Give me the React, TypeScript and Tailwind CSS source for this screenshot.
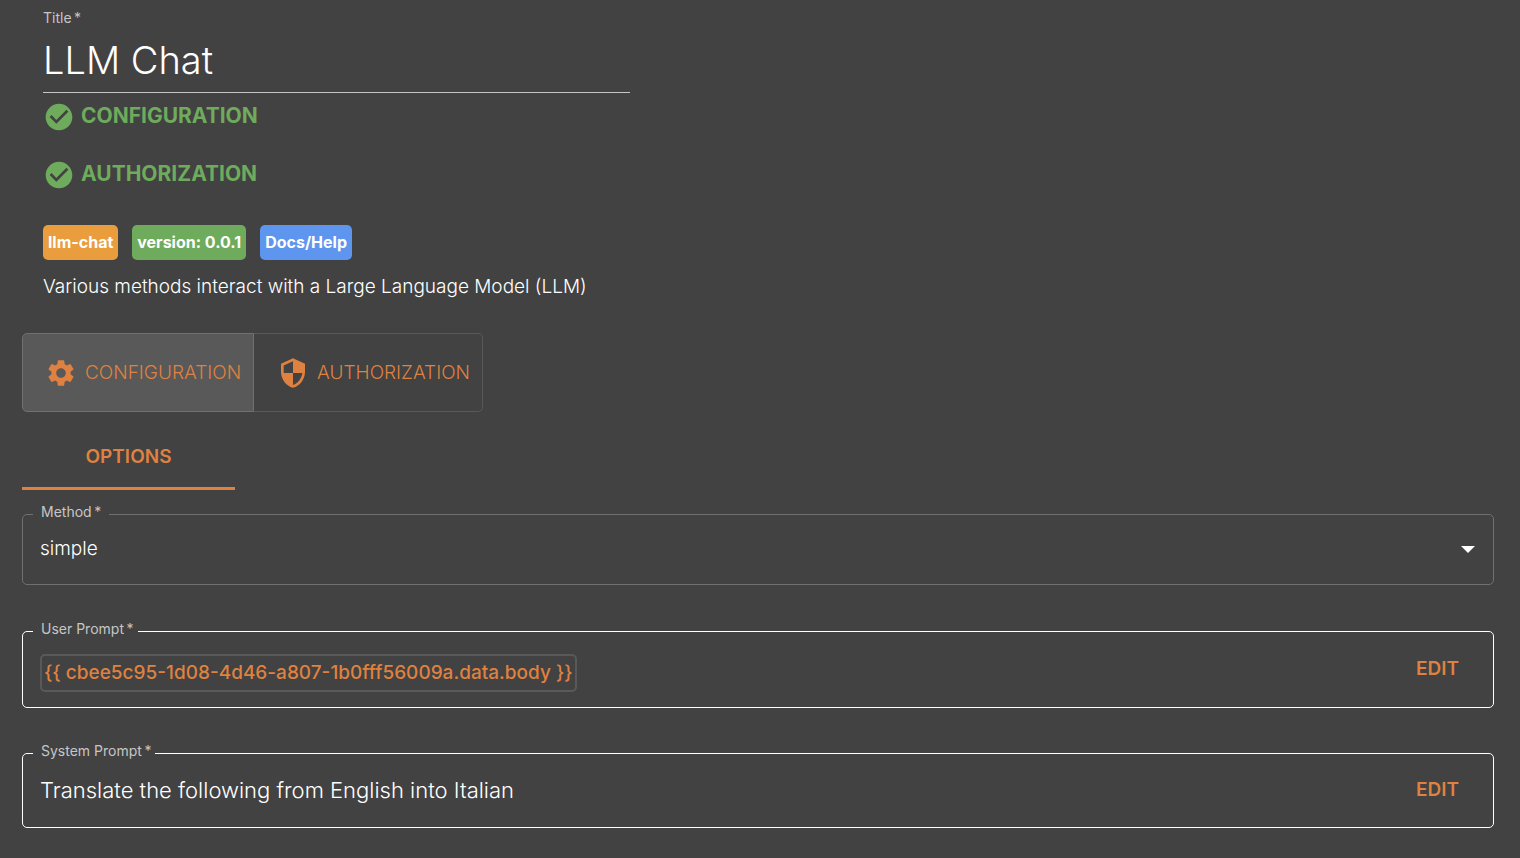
import { useState } from "react";
import type { ReactNode } from "react";
import { MdCheckCircle, MdSettings, MdSecurity } from "react-icons/md";

function Status({ label }: { label: string }) {
  return (
    <li className="flex h-8 items-center gap-[6px] text-[21px] leading-8 font-bold text-[#6eab5c]">
      <MdCheckCircle className="size-8" aria-hidden="true" />
      <span className="pb-[2px]">{label}</span>
    </li>
  );
}

const legendClass =
  "ml-[10px] pl-2 pr-1 pb-1 text-sm leading-4 text-[#c6c6c6]";

function PromptField({ label, children }: { label: string; children: ReactNode }) {
  return (
    <fieldset className="min-w-0 rounded-[5px] border border-white">
      <legend className={legendClass}>{label}&thinsp;*</legend>
      <div className="flex items-center justify-between pt-[13px] pr-[34px] pb-[15px] pl-[17px]">
        {children}
        <button
          type="button"
          aria-label={"Edit " + label}
          className="pb-2 text-[19px] leading-6 font-semibold text-[#df8140]"
        >
          EDIT
        </button>
      </div>
    </fieldset>
  );
}

export default function App() {
  const [title, setTitle] = useState("LLM Chat");
  return (
    <main className="min-h-screen bg-[#424242] pt-[10px] pr-[26px] pb-[30px] pl-[22px] font-['Inter',sans-serif] text-white">
      <header className="pl-[21px]">
        <div className="flex max-w-[587px] flex-col">
          <label htmlFor="title" className="text-sm leading-4 text-[#c6c6c6]">
            Title&thinsp;*
          </label>
          <input
            id="title"
            value={title}
            onChange={(e) => setTitle(e.target.value)}
            className="h-[67px] w-full border-b border-[#c6c6c6] bg-transparent pt-[2px] text-[38px] font-[350] outline-none"
          />
        </div>
        <ul className="mt-2 flex flex-col gap-[26px]">
          <Status label="CONFIGURATION" />
          <Status label="AUTHORIZATION" />
        </ul>
        <div className="mt-[34px] flex gap-[14px] text-base leading-[35px] font-bold">
          <span className="rounded-[5px] bg-[#e99d3d] px-[5px]">llm-chat</span>
          <span className="rounded-[5px] bg-[#6eab5c] px-[5px]">version: 0.0.1</span>
          <a href="#docs" className="rounded-[5px] bg-[#5e95ee] px-[5px]">
            Docs/Help
          </a>
        </div>
        <p className="mt-[15px] text-[19px] leading-6 font-[350]">
          Various methods interact with a Large Language Model (LLM)
        </p>
      </header>

      <div className="mt-[34px] flex w-fit text-[19px] font-light text-[#df8140]">
        <button
          type="button"
          aria-pressed="true"
          className="flex h-[79px] items-center gap-2 rounded-l-[5px] border border-[#707070] bg-[#595959] pr-3 pl-[22px]"
        >
          <MdSettings className="size-8" aria-hidden="true" />
          <span className="pt-[2px]">CONFIGURATION</span>
        </button>
        <button
          type="button"
          aria-pressed="false"
          className="flex h-[79px] items-center gap-2 rounded-r-[5px] border border-l-0 border-[#595959] pr-3 pl-[23px]"
        >
          <MdSecurity className="size-8" aria-hidden="true" />
          <span className="pt-[2px]">AUTHORIZATION</span>
        </button>
      </div>

      <div role="tablist" className="mt-3 flex">
        <button
          type="button"
          role="tab"
          aria-selected="true"
          className="h-[66px] w-[213px] border-b-3 border-[#df8140] pt-1 text-[19px] font-semibold text-[#df8140]"
        >
          OPTIONS
        </button>
      </div>

      <form className="mt-[14px] flex flex-col gap-[35px]">
        <fieldset className="mb-px min-w-0 rounded-[5px] border border-[#707070]">
          <legend className={legendClass}>
            <label htmlFor="method" className="pr-1">
              Method&thinsp;*
            </label>
          </legend>
          <div className="relative">
            <select
              id="method"
              className="h-[60px] w-full appearance-none bg-transparent pr-12 pb-[10px] pl-[17px] text-[19px] font-[350] outline-none"
            >
              <option>simple</option>
            </select>
            <svg
              viewBox="0 0 14 7"
              className="pointer-events-none absolute top-[22px] right-[18px] h-[7px] w-[14px] fill-white"
              aria-hidden="true"
            >
              <path d="M0 0h14L7 7z" />
            </svg>
          </div>
        </fieldset>

        <PromptField label="User Prompt">
          <code className="rounded-[5px] border-2 border-[#595959] px-[2px] font-['Inter',sans-serif] text-[19px] leading-[34px] font-medium text-[#df8140]">
            {"{{ cbee5c95-1d08-4d46-a807-1b0fff56009a.data.body }}"}
          </code>
        </PromptField>
        <PromptField label="System Prompt">
          <p className="pb-2 text-[22px] leading-7 font-light">
            Translate the following from English into Italian
          </p>
        </PromptField>
      </form>
    </main>
  );
}
